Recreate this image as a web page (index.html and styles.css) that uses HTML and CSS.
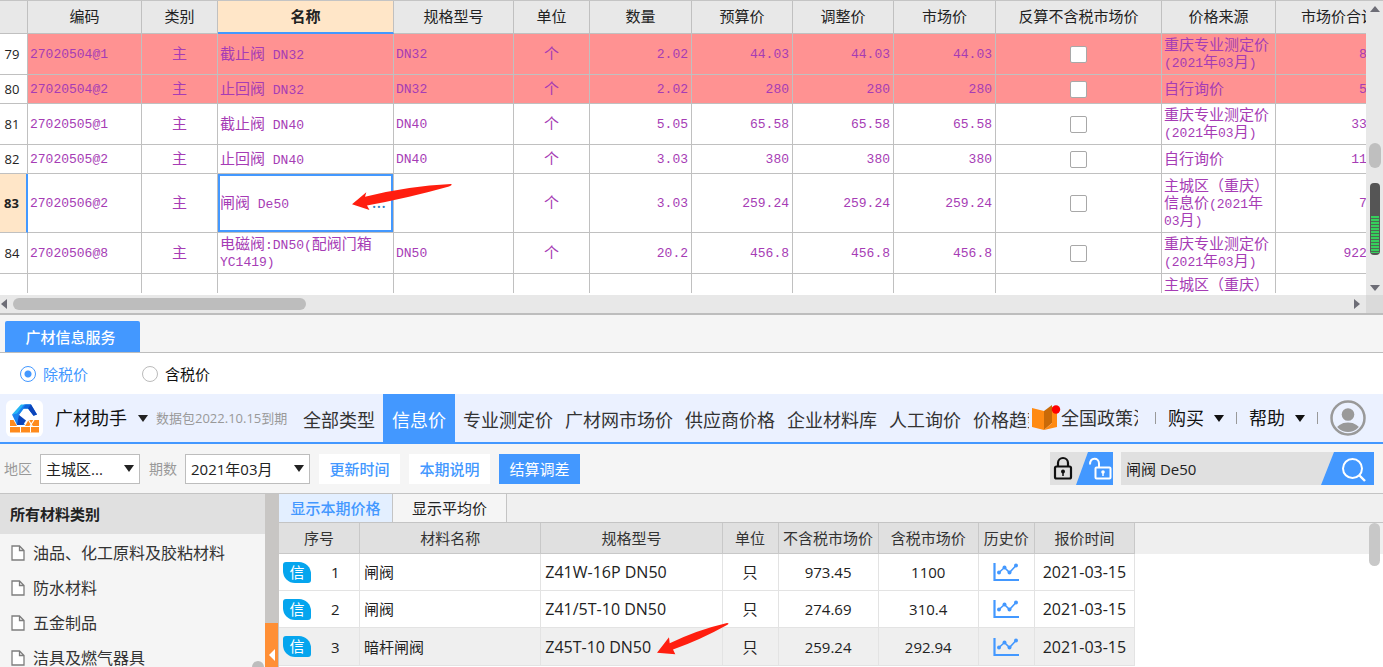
FILE: index.html
```html
<!DOCTYPE html>
<html lang="zh-CN">
<head>
<meta charset="utf-8">
<title>广材助手</title>
<link rel="stylesheet" href="styles.css">
</head>
<body>
<svg class="defs" aria-hidden="true">
  <symbol id="trend" viewBox="0 0 26 20"><path d="M1.500 1v17H26" fill="none" stroke="#4398ff" stroke-width="2.200"/><path d="M6 10.500l5.500-5 5 5 6.500-7" fill="none" stroke="#4398ff" stroke-width="1.600"/><g fill="#4398ff"><circle cx="6" cy="10.500" r="2"/><circle cx="11.500" cy="5.500" r="2"/><circle cx="16.500" cy="10.500" r="2"/><circle cx="23" cy="3.500" r="2"/></g></symbol>
  <symbol id="doc" viewBox="0 0 14 16"><path d="M1 1h7.500L13 5.500V15H1zM8.500 1v4.500H13" fill="#fff" stroke="#7d7d7d" stroke-width="1.300"/></symbol>
  <symbol id="down" viewBox="0 0 10 7"><path d="M0 0h10L5 7z" fill="currentColor"/></symbol>
</svg>

<section class="grid-panel">
  <div class="grid-row">
    <div class="grid-view">
      <table class="grid">
        <colgroup><col class="w28"><col class="w114"><col class="w76"><col><col class="w120"><col class="w76"><col class="w102"><col class="w101"><col class="w101"><col class="w102"><col class="w166"><col class="w114"><col class="w126"></colgroup>
        <thead><tr><th></th><th>编码</th><th>类别</th><th class="on">名称</th><th>规格型号</th><th>单位</th><th>数量</th><th>预算价</th><th>调整价</th><th>市场价</th><th>反算不含税市场价</th><th>价格来源</th><th>市场价合计</th></tr></thead>
        <tbody>
        <tr class="hit"><th>79</th><td class="m">27020504@1</td><td class="c">主</td><td>截止阀<span class="m"> DN32</span></td><td class="m">DN32</td><td class="c">个</td><td class="n">2.02</td><td class="n">44.03</td><td class="n">44.03</td><td class="n">44.03</td><td class="k"><input type="checkbox" aria-label="反算 79"></td><td>重庆专业测定价<br><span class="m">(2021</span>年<span class="m">03</span>月<span class="m">)</span></td><td class="n">88.94</td></tr>
        <tr class="hit"><th>80</th><td class="m">27020504@2</td><td class="c">主</td><td>止回阀<span class="m"> DN32</span></td><td class="m">DN32</td><td class="c">个</td><td class="n">2.02</td><td class="n">280</td><td class="n">280</td><td class="n">280</td><td class="k"><input type="checkbox" aria-label="反算 80"></td><td>自行询价</td><td class="n">565.6</td></tr>
        <tr><th>81</th><td class="m">27020505@1</td><td class="c">主</td><td>截止阀<span class="m"> DN40</span></td><td class="m">DN40</td><td class="c">个</td><td class="n">5.05</td><td class="n">65.58</td><td class="n">65.58</td><td class="n">65.58</td><td class="k"><input type="checkbox" aria-label="反算 81"></td><td>重庆专业测定价<br><span class="m">(2021</span>年<span class="m">03</span>月<span class="m">)</span></td><td class="n">331.18</td></tr>
        <tr><th>82</th><td class="m">27020505@2</td><td class="c">主</td><td>止回阀<span class="m"> DN40</span></td><td class="m">DN40</td><td class="c">个</td><td class="n">3.03</td><td class="n">380</td><td class="n">380</td><td class="n">380</td><td class="k"><input type="checkbox" aria-label="反算 82"></td><td>自行询价</td><td class="n">1151.4</td></tr>
        <tr class="cur"><th>83</th><td class="m">27020506@2</td><td class="c">主</td><td class="sel"><div class="edit"><span>闸阀<span class="m"> De50</span></span><button class="dots" aria-label="更多">...</button></div></td><td></td><td class="c">个</td><td class="n">3.03</td><td class="n">259.24</td><td class="n">259.24</td><td class="n">259.24</td><td class="k"><input type="checkbox" aria-label="反算 83"></td><td>主城区（重庆）<br>信息价<span class="m">(2021</span>年<br><span class="m">03</span>月<span class="m">)</span></td><td class="n">785.5</td></tr>
        <tr><th>84</th><td class="m">27020506@8</td><td class="c">主</td><td>电磁阀<span class="m">:DN50(</span>配阀门箱<br><span class="m">YC1419)</span></td><td class="m">DN50</td><td class="c">个</td><td class="n">20.2</td><td class="n">456.8</td><td class="n">456.8</td><td class="n">456.8</td><td class="k"><input type="checkbox" aria-label="反算 84"></td><td>重庆专业测定价<br><span class="m">(2021</span>年<span class="m">03</span>月<span class="m">)</span></td><td class="n">9227.36</td></tr>
        <tr class="last"><th></th><td></td><td></td><td></td><td></td><td></td><td></td><td></td><td></td><td></td><td></td><td>主城区（重庆）</td><td></td></tr>
        </tbody>
      </table>
    </div>
    <div class="vbar">
      <svg class="tri" viewBox="0 0 10 6"><path d="M0 6h10L5 0z" fill="#6d6d76"/></svg>
      <div class="thumb"></div>
      <div class="gauge"><i></i></div>
      <svg class="tri" viewBox="0 0 10 6"><path d="M0 0h10L5 6z" fill="#6d6d76"/></svg>
    </div>
  </div>
  <div class="hbar">
    <svg class="side" viewBox="0 0 6 10"><path d="M6 0v10L0 5z" fill="#6d6d76"/></svg>
    <div class="track"><div class="hthumb"></div></div>
    <svg class="side" viewBox="0 0 6 10"><path d="M0 0v10l6-5z" fill="#6d6d76"/></svg>
    <div class="corner"></div>
  </div>
  <svg class="arrow first" viewBox="0 0 100 28"><path d="M0 20.300L14.300 8.300 13 12.700Q56 2 99 0 101 1 97 2.500 56 14 15 21.500L17.500 26z" fill="#ff1e0f"/></svg>
</section>

<div class="tabstrip"><button class="service">广材信息服务</button></div>
<div class="tax">
  <label class="picked"><input type="radio" name="tax" checked>除税价</label>
  <label><input type="radio" name="tax">含税价</label>
</div>

<header class="top">
  <div class="brand">
    <svg class="logo" viewBox="0 0 37 37"><rect width="37" height="37" rx="6" fill="#fff"/><path d="M4 20h29v12.500H4z" fill="#ff8a1c"/><path d="M4 26.500h29M14.500 26.500v6M24.500 26.500v6" stroke="#fff" stroke-width="1"/><path d="M16 19h6l4.500 7.500M28 20l-4 6" fill="none" stroke="#fff" stroke-width="1.200"/><path d="M5 15.500L11 26h8l3.500-6-6-4.500z" fill="#fff"/><path d="M15 4.500h10L22 8.500H18L12.500 15 6 14.500z" fill="#25b5f5"/><path d="M18 4.500h7L22 8.500h-4.500L13 15l6 10h-8L6 14.500l5-1z" fill="#1b82f0"/><path d="M13 15l7 5.500-3 4.500h-6z" fill="#0b45bb"/><path d="M17 8.500L19.500 4.500H25L31 14.500l-3.500 1.200L22 8.500z" fill="#1265dc"/><path d="M22 8.500l3-4 6 10-3.500 1.200z" fill="#0b45bb"/></svg>
    <span class="name">广材助手</span>
    <svg class="caret"><use href="#down"/></svg>
    <span class="expiry">数据包2022.10.15到期</span>
  </div>
  <nav class="nav"><a href="#">全部类型</a><a href="#" class="active">信息价</a><a href="#">专业测定价</a><a href="#">广材网市场价</a><a href="#">供应商价格</a><a href="#">企业材料库</a><a href="#">人工询价</a><a href="#">价格趋势</a></nav>
  <div class="account">
    <svg class="book" viewBox="0 0 29 26"><path d="M0 3l12 3v19L0 22z" fill="#ff8a12"/><path d="M12 6l8-6v18l-8 7z" fill="#c96a08"/><path d="M20 2l5 1v19l-13 3 8-7z" fill="#ff8a12"/><circle cx="24" cy="4.500" r="4.200" fill="#f00"/></svg>
    <a href="#" class="policy">全国政策法规</a>
    <span class="bar"></span>
    <button class="menu">购买<svg class="caret"><use href="#down"/></svg></button>
    <span class="bar"></span>
    <button class="menu">帮助<svg class="caret"><use href="#down"/></svg></button>
    <span class="bar"></span>
    <svg class="avatar" viewBox="0 0 36 36"><defs><clipPath id="face"><circle cx="18" cy="18" r="14"/></clipPath></defs><circle cx="18" cy="18" r="16.500" fill="#ebf1ff" stroke="#999" stroke-width="2.500"/><g fill="#999" clip-path="url(#face)"><circle cx="18" cy="14.500" r="6.300"/><ellipse cx="18" cy="31" rx="12" ry="8.500"/></g></svg>
  </div>
</header>

<div class="tools">
  <label for="area">地区</label>
  <div class="pick area"><select id="area"><option>主城区...</option></select><svg class="caret"><use href="#down"/></svg></div>
  <label for="period">期数</label>
  <div class="pick period"><select id="period"><option>2021年03月</option></select><svg class="caret"><use href="#down"/></svg></div>
  <button class="btn">更新时间</button>
  <button class="btn">本期说明</button>
  <button class="btn solid">结算调差</button>
  <button class="locks" aria-label="锁定"><svg viewBox="0 0 63 33"><path d="M0 0h63v33H0z" fill="#e0e0e0"/><path d="M38 0h25v33H26z" fill="#4398ff"/><rect x="5" y="14.500" width="16" height="12" rx="1.500" fill="none" stroke="#111" stroke-width="2.200"/><path d="M8 14V11a5 5 0 0 1 10 0v3" fill="none" stroke="#111" stroke-width="2.200"/><circle cx="13" cy="19.500" r="2" fill="#111"/><path d="M13 20v4" stroke="#111" stroke-width="1.500"/><rect x="45.500" y="15.500" width="15" height="11" rx="1" fill="none" stroke="#fff" stroke-width="2"/><path d="M40 12.500c0-7.500 9-7.500 9-1v4" fill="none" stroke="#fff" stroke-width="2"/><circle cx="53" cy="20" r="1.800" fill="#fff"/><path d="M53 20v4" stroke="#fff" stroke-width="1.500"/></svg></button>
  <div class="search"><input type="text" value="闸阀 De50" aria-label="搜索"><button aria-label="搜索"><svg viewBox="0 0 53 33"><path d="M13 0h40v33H0z" fill="#4398ff"/><circle cx="31.500" cy="16.500" r="9.500" fill="none" stroke="#fff" stroke-width="2"/><path d="M38 23l6 6" stroke="#fff" stroke-width="2.400"/></svg></button></div>
</div>

<main class="lower">
  <aside class="sidebar">
    <h2>所有材料类别</h2>
    <ul>
      <li><svg><use href="#doc"/></svg>油品、化工原料及胶粘材料</li>
      <li><svg><use href="#doc"/></svg>防水材料</li>
      <li><svg><use href="#doc"/></svg>五金制品</li>
      <li><svg><use href="#doc"/></svg>洁具及燃气器具</li>
    </ul>
    <span class="knob"></span>
  </aside>
  <div class="splitter"><button aria-label="收起"><svg viewBox="0 0 6 12"><path d="M6 0v12L0 6z" fill="#fff"/></svg></button></div>
  <section class="results">
    <div class="views"><button class="chosen">显示本期价格</button><button>显示平均价</button></div>
    <div class="sheet">
      <table class="prices">
        <colgroup><col class="p81"><col class="p181"><col class="p181"><col class="p56"><col class="p100"><col class="p100"><col class="p56"><col class="p100"></colgroup>
        <thead><tr><th>序号</th><th>材料名称</th><th>规格型号</th><th>单位</th><th>不含税市场价</th><th>含税市场价</th><th>历史价</th><th>报价时间</th></tr></thead>
        <tbody>
        <tr><td><div class="seq"><span class="tag">信</span>1</div></td><td class="l">闸阀</td><td class="l w">Z41W-16P DN50</td><td>只</td><td>973.45</td><td>1100</td><td><svg class="trend"><use href="#trend"/></svg></td><td class="w">2021-03-15</td></tr>
        <tr><td><div class="seq"><span class="tag">信</span>2</div></td><td class="l">闸阀</td><td class="l w">Z41/5T-10 DN50</td><td>只</td><td>274.69</td><td>310.4</td><td><svg class="trend"><use href="#trend"/></svg></td><td class="w">2021-03-15</td></tr>
        <tr class="shade"><td><div class="seq"><span class="tag">信</span>3</div></td><td class="l">暗杆闸阀</td><td class="l w">Z45T-10 DN50</td><td>只</td><td>259.24</td><td>292.94</td><td><svg class="trend"><use href="#trend"/></svg></td><td class="w">2021-03-15</td></tr>
        </tbody>
      </table>
      <span class="page-thumb"></span>
    </div>
    <svg class="arrow second" viewBox="0 0 72 33"><path d="M0 29.700L12 14.300 12.700 20.300Q40 7 70 0 73 0 70 2 43 17 16 26.500L18.300 31.300z" fill="#ff1e0f"/></svg>
  </section>
</main>
</body>
</html>
```
FILE: styles.css
```css
* { box-sizing: border-box; }
body {
  margin: 0;
  height: 100vh;
  display: flex;
  flex-direction: column;
  overflow: hidden;
  background: #f5f5f5;
  color: #222;
  font: 15px/20px "Open Sans", "Noto Sans CJK SC", sans-serif;
}
button, select, input { font: inherit; color: inherit; margin: 0; padding: 0; border: 0; background: none; }
a { color: inherit; text-decoration: none; }
svg { display: block; flex: none; }
.defs { position: absolute; width: 0; height: 0; }
.caret { width: 10px; height: 7px; }

/* upper grid */
.grid-panel { position: relative; flex: none; border-top: 1px solid #c4c4c4; border-bottom: 2px solid #bdbdbd; background: #fff; }
.grid-row { display: flex; height: 294px; }
.grid-view { flex: 1; min-width: 0; height: 292px; overflow: hidden; }
.grid {
  width: calc(100% + 36px);
  table-layout: fixed;
  border-spacing: 0;
  font-family: "Noto Sans CJK SC", sans-serif;
  line-height: 17px;
  color: #a63cb5;
}
.w28 { width: 28px; } .w76 { width: 76px; } .w101 { width: 101px; } .w102 { width: 102px; }
.w114 { width: 114px; } .w120 { width: 120px; } .w126 { width: 126px; } .w166 { width: 166px; }
.grid th, .grid td { border: solid #c0c0c0; border-width: 0 1px 1px 0; white-space: nowrap; overflow: hidden; }
.grid td { text-align: left; height: 29px; padding: 1px 2px 5px; }
.grid td.m, .grid td.k { padding: 3px 2px; }
.grid th { font-weight: 400; color: #222; padding: 0; text-align: center; }
.grid thead th { height: 33px; padding-bottom: 3px; background: #e8e8e8; }
.grid thead .on { background: #ffe6c8; font-weight: 700; border-bottom: 2px solid #4398ff; }
.grid tbody th { background: #fff; font-family: "Open Sans", sans-serif; font-size: 13px; padding-right: 3px; }
.grid .m, .grid .n { font-family: "Liberation Mono", monospace; font-size: 13px; }
.grid span.m { line-height: 1px; white-space: pre; }
.grid td.c { text-align: center; }
.grid td.n { text-align: right; padding: 3px 3px 3px 2px; }
.grid .hit td { background: #ff9292; }
.grid .cur th { background: #ffe6c8; font-weight: 700; border-right: 2px solid #4398ff; }
.grid .cur td { height: 59px; }
.grid .sel { box-shadow: inset 0 0 0 2px #4398ff; }
.grid .last td { height: 59px; vertical-align: top; }
.edit { display: flex; justify-content: space-between; align-items: center; }
.dots { color: #2f7fc4; font-family: "Open Sans", sans-serif; font-size: 18px; line-height: 17px; padding-right: 5px; }
.grid input {
  appearance: none; display: block; width: 17px; height: 17px; margin: 0 auto;
  border: 1px solid #a8a8a8; border-radius: 2px; background: #fff;
}
.vbar { width: 17px; background: #e8e8e8; display: flex; flex-direction: column; align-items: center; padding: 5px 0 4px; }
.vbar .tri { width: 10px; height: 6px; }
.thumb { width: 12px; height: 25px; margin-top: 131px; border-radius: 6px; background: #bfbfbf; }
.gauge { width: 10px; height: 72px; margin: 15px 0 auto; padding: 33px 1px 2px; border-radius: 4px; background: #555; }
.gauge i { display: block; height: 37px; background: repeating-linear-gradient(#35d05c 0 2px, #4d6b53 2px 3px); }
.hbar { height: 18px; display: flex; align-items: center; background: #e8e8e8; }
.hbar .side { width: 6px; height: 10px; margin-left: 1px; }
.track { flex: 1; padding: 0 6px; }
.hthumb { width: 22%; height: 12px; border-radius: 6px; background: #bdbdbd; }
.hbar .corner { width: 17px; height: 18px; margin-left: 6px; background: #dadada; }
.arrow { position: absolute; }
.first { left: 352px; top: 183px; width: 100px; height: 28px; }

/* service tab and tax options */
.tabstrip { flex: none; padding: 6px 5px 0; border-bottom: 1px solid #bdbdbd; }
.service { display: block; width: 135px; height: 31px; padding-right: 4px; border-radius: 2px 2px 0 0; background: #4398ff; color: #fff; font-weight: 500; }
.tax { flex: none; height: 41px; display: flex; align-items: center; gap: 54px; padding-left: 20px; background: #fff; color: #111; }
.tax label { display: flex; align-items: center; gap: 7px; }
.tax .picked { color: #4398ff; }
.tax input { appearance: none; width: 16px; height: 16px; border: 1px solid #bbb; border-radius: 50%; background: #fff; }
.tax input:checked { border-color: #4398ff; background: radial-gradient(#4398ff 0 3px, #fff 4px); }

/* product header */
.top { flex: none; height: 50px; display: flex; background: #ebf1ff; border-bottom: 2px solid #4398ff; font-size: 18px; }
.brand { width: 303px; flex: none; display: flex; align-items: center; padding-left: 6px; white-space: nowrap; }
.logo { width: 37px; height: 37px; }
.brand .name { margin: 0 11px 0 12px; color: #111; }
.expiry { margin-left: 8px; font-size: 13px; color: #999; }
.nav { flex: 1; min-width: 0; display: flex; gap: 12px; overflow: hidden; line-height: 52px; white-space: nowrap; color: #333; }
.nav a { flex: none; }
.nav .active { padding: 0 9px; margin: 0 -4px; background: #4398ff; color: #fff; }
.account { flex: none; display: flex; align-items: center; gap: 12px; padding: 0 17px 0 3px; color: #111; }
.book { width: 29px; height: 26px; }
.policy { width: 77px; margin-left: -12px; overflow: hidden; white-space: nowrap; color: #333; }
.bar { width: 1px; height: 12px; background: #999; }
.account .bar:first-of-type { margin-left: 5px; }
.menu { display: flex; align-items: center; gap: 10px; }
.avatar { width: 36px; height: 36px; }

/* toolbar */
.tools { flex: none; height: 49px; display: flex; align-items: center; padding: 0 9px 0 4px; color: #222; }
.tools label { color: #999; font-size: 14px; }
.pick { position: relative; height: 30px; border: 1px solid #bdbdbd; background: #fff; }
.pick select { appearance: none; width: 100%; height: 28px; padding-left: 5px; }
.pick .caret { position: absolute; right: 5px; top: 10px; pointer-events: none; }
.area { width: 100px; margin: 0 9px 0 8px; }
.period { width: 125px; margin: 0 9px 0 8px; }
.btn { width: 81px; height: 30px; margin-right: 9px; background: #fff; color: #4398ff; font-weight: 500; }
.solid { background: #4398ff; color: #fff; font-weight: 400; }
.locks { margin-left: auto; width: 63px; }
.search { width: 253px; height: 33px; margin-left: 8px; display: flex; background: #e0e0e0; }
.search input { flex: 1; min-width: 0; padding-left: 5px; }
.search button { width: 53px; }

/* lower area */
.lower { flex: 1; min-height: 0; display: flex; border-top: 1px solid #c4c4c4; background: #fff; }
.sidebar { position: relative; width: 265px; flex: none; overflow: hidden; background: #f5f5f5; font-size: 16px; }
.sidebar h2 { margin: 0; padding: 0 10px; line-height: 40px; background: #e0e0e0; font-size: 15px; font-weight: 700; }
.sidebar ul { list-style: none; margin: 0; padding: 1px 0 0 11px; color: #333; }
.sidebar li { display: flex; align-items: center; gap: 8px; height: 35px; white-space: nowrap; }
.sidebar li svg { width: 14px; height: 16px; }
.knob { position: absolute; right: 1px; bottom: -6px; width: 12px; height: 12px; border-radius: 6px; background: #bdbdbd; }
.splitter { width: 14px; flex: none; display: flex; align-items: flex-end; background: #c8c6c4; }
.splitter button { width: 13px; height: 44px; padding: 20px 3px 0 4px; background: #ff8f35; }
.splitter svg { width: 6px; height: 12px; }
.results { position: relative; flex: 1; min-width: 0; }
.views { height: 29px; display: flex; background: #f0f0f0; border-bottom: 1px solid #c4c4c4; }
.views button { width: 114px; border-right: 1px solid #c4c4c4; background: #f5f5f5; }
.views .chosen { background: #e3efff; color: #4398ff; font-weight: 500; }
.sheet { position: relative; background: linear-gradient(#efefef 31px, #fff 31px); }
.prices { width: 856px; table-layout: fixed; border-spacing: 0; text-align: center; white-space: nowrap; }
.p56 { width: 56px; } .p81 { width: 81px; } .p100 { width: 100px; } .p181 { width: 181px; }
.prices th { height: 31px; padding: 0; font-weight: 400; color: #333; background: #e0e0e0; border: solid #c8c8c8; border-width: 0 1px 1px 0; }
.prices td { height: 37px; padding: 0; border: solid #e3e3e3; border-width: 0 1px 1px 0; }
.prices .l { text-align: left; padding-left: 4px; }
.prices .w { font-size: 16px; }
.prices .shade td { background: #efefef; height: 38px; }
.seq { display: flex; align-items: center; gap: 20px; padding-left: 4px; }
.tag { width: 28px; height: 21px; border-radius: 3px 12px 3px 12px; background: #05a5ee; color: #fff; }
.trend { width: 26px; height: 20px; margin: 0 auto; }
.page-thumb { position: absolute; right: 3px; top: 0; width: 11px; height: 43px; border-radius: 6px; background: #c8c8c8; }
.second { left: 378px; top: 129px; width: 72px; height: 33px; }
```
